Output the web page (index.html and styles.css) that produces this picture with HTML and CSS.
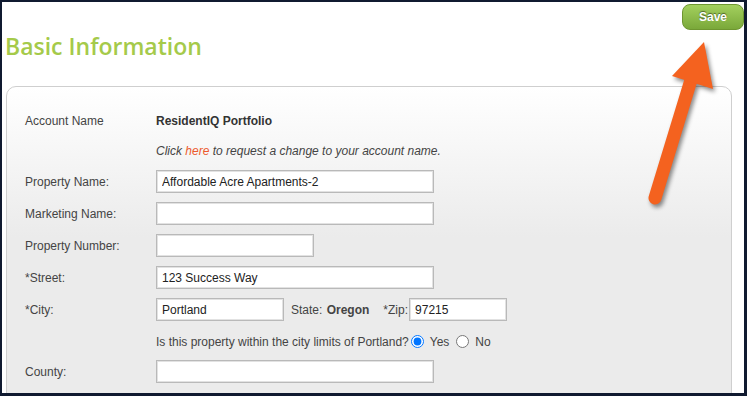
FILE: index.html
```html
<!DOCTYPE html>
<html lang="en">
<head>
    <meta charset="UTF-8">
    <meta name="viewport" content="width=device-width, initial-scale=1.0">
    <title>Basic Information</title>
    <link rel="stylesheet" href="styles.css">
</head>
<body>
    <div class="frame">
        <div class="header">
            <h1>Basic Information</h1>
            <button type="button" class="save-btn">Save</button>
        </div>

        <div class="panel">
            <div class="form-row">
                <span class="label">Account Name</span>
                <span class="value">ResidentIQ Portfolio</span>
            </div>
            <div class="form-row">
                <span class="label"></span>
                <span class="note">Click <a href="#">here</a> to request a change to your account name.</span>
            </div>
            <div class="form-row">
                <label class="label" for="propertyName">Property Name:</label>
                <input type="text" id="propertyName" class="w-long" value="Affordable Acre Apartments-2">
            </div>
            <div class="form-row">
                <label class="label" for="marketingName">Marketing Name:</label>
                <input type="text" id="marketingName" class="w-long">
            </div>
            <div class="form-row">
                <label class="label" for="propertyNumber">Property Number:</label>
                <input type="text" id="propertyNumber" class="w-mid">
            </div>
            <div class="form-row">
                <label class="label" for="street">*Street:</label>
                <input type="text" id="street" class="w-long" value="123 Success Way">
            </div>
            <div class="form-row">
                <label class="label" for="city">*City:</label>
                <input type="text" id="city" class="w-city" value="Portland">
                <span class="state">State: <b>Oregon</b></span>
                <label class="zip-label" for="zip">*Zip:</label>
                <input type="text" id="zip" class="w-zip" value="97215">
            </div>
            <div class="form-row">
                <span class="label"></span>
                <span>Is this property within the city limits of Portland?</span>
                <input type="radio" id="limitsYes" name="limits" class="radio" checked>
                <label for="limitsYes" class="radio-label">Yes</label>
                <input type="radio" id="limitsNo" name="limits" class="radio">
                <label for="limitsNo" class="radio-label">No</label>
            </div>
            <div class="form-row">
                <label class="label" for="county">County:</label>
                <input type="text" id="county" class="w-long">
            </div>
        </div>
    </div>

    <!-- callout arrow pointing at the save button -->
    <svg class="callout" width="747" height="396" viewBox="0 0 747 396">
        <g class="arrow">
            <line x1="655" y1="198" x2="691" y2="80" stroke="#f4621f" stroke-width="13" stroke-linecap="round"/>
            <polygon points="704,42 672,76 713,89" fill="#f4621f"/>
        </g>
    </svg>
</body>
</html>
```

FILE: styles.css
```css
body {
    margin: 0;
    background-color: #101a30;
    font-family: "Liberation Sans", Arial, sans-serif;
    font-size: 12px;
    color: #444;
    height: 396px;
    overflow: hidden;
}
.frame {
    background-color: #fff;
    margin: 2px 3px 0 2px;
    height: 391px;
    overflow: hidden;
}
.header {
    display: flex;
    justify-content: space-between;
    align-items: flex-start;
}
h1 {
    margin: 29px 0 0 3px;
    font-family: "Open Sans", sans-serif;
    font-weight: 600;
    font-size: 23px;
    line-height: 30px;
    color: #a5ca4a;
}
.save-btn {
    margin-top: 2px;
    width: 62px;
    height: 26px;
    border: 1px solid #6e9630;
    border-radius: 8px;
    background: linear-gradient(#a3d05e, #7aa83a);
    color: #fff;
    font-family: "Liberation Sans", Arial, sans-serif;
    font-weight: bold;
    font-size: 12px;
    text-shadow: 0 -1px 1px rgba(0, 0, 0, 0.5);
    cursor: pointer;
}
.panel {
    margin: 25px 12px 0 4px;
    padding: 23px 18px 0 18px;
    border: 1px solid #cfcfcf;
    border-radius: 10px 10px 0 0;
    background: linear-gradient(#ffffff 0, #ebebeb 150px, #ebebeb 100%);
    height: 400px;
}
.form-row {
    display: flex;
    align-items: center;
    height: 23px;
    margin-bottom: 9px;
    white-space: nowrap;
}
.form-row:nth-child(1),
.form-row:nth-child(2) {
    height: 21px;
}
.form-row:nth-child(8) {
    margin-bottom: 7px;
}
.label {
    width: 131px;
    flex-shrink: 0;
}
.value {
    font-weight: bold;
    color: #333;
}
.note {
    font-style: italic;
}
.note a {
    color: #ec5a2c;
    text-decoration: none;
}
input[type="text"] {
    box-sizing: border-box;
    height: 23px;
    padding: 0 5px;
    border: 1px solid #b9b9b9;
    box-shadow: inset 0 0 0 1px #e2e2e2;
    background-color: #fff;
    font-family: "Liberation Sans", Arial, sans-serif;
    font-size: 12px;
    color: #222;
    outline: none;
}
.w-long {
    width: 278px;
}
.w-mid {
    width: 158px;
}
.w-city {
    width: 128px;
}
.w-zip {
    width: 98px;
}
.state {
    margin-left: 7px;
}
.state b {
    margin-left: 1px;
}
.zip-label {
    margin-left: 14px;
    margin-right: 1px;
}
.radio {
    margin: 0 6px 0 2px;
    width: 13px;
    height: 13px;
}
.radio-label {
    margin-right: 5px;
}
.callout {
    position: absolute;
    top: 0;
    left: 0;
    pointer-events: none;
}
.arrow {
    filter: drop-shadow(2px 3px 2px rgba(0, 0, 0, 0.45));
}
```
